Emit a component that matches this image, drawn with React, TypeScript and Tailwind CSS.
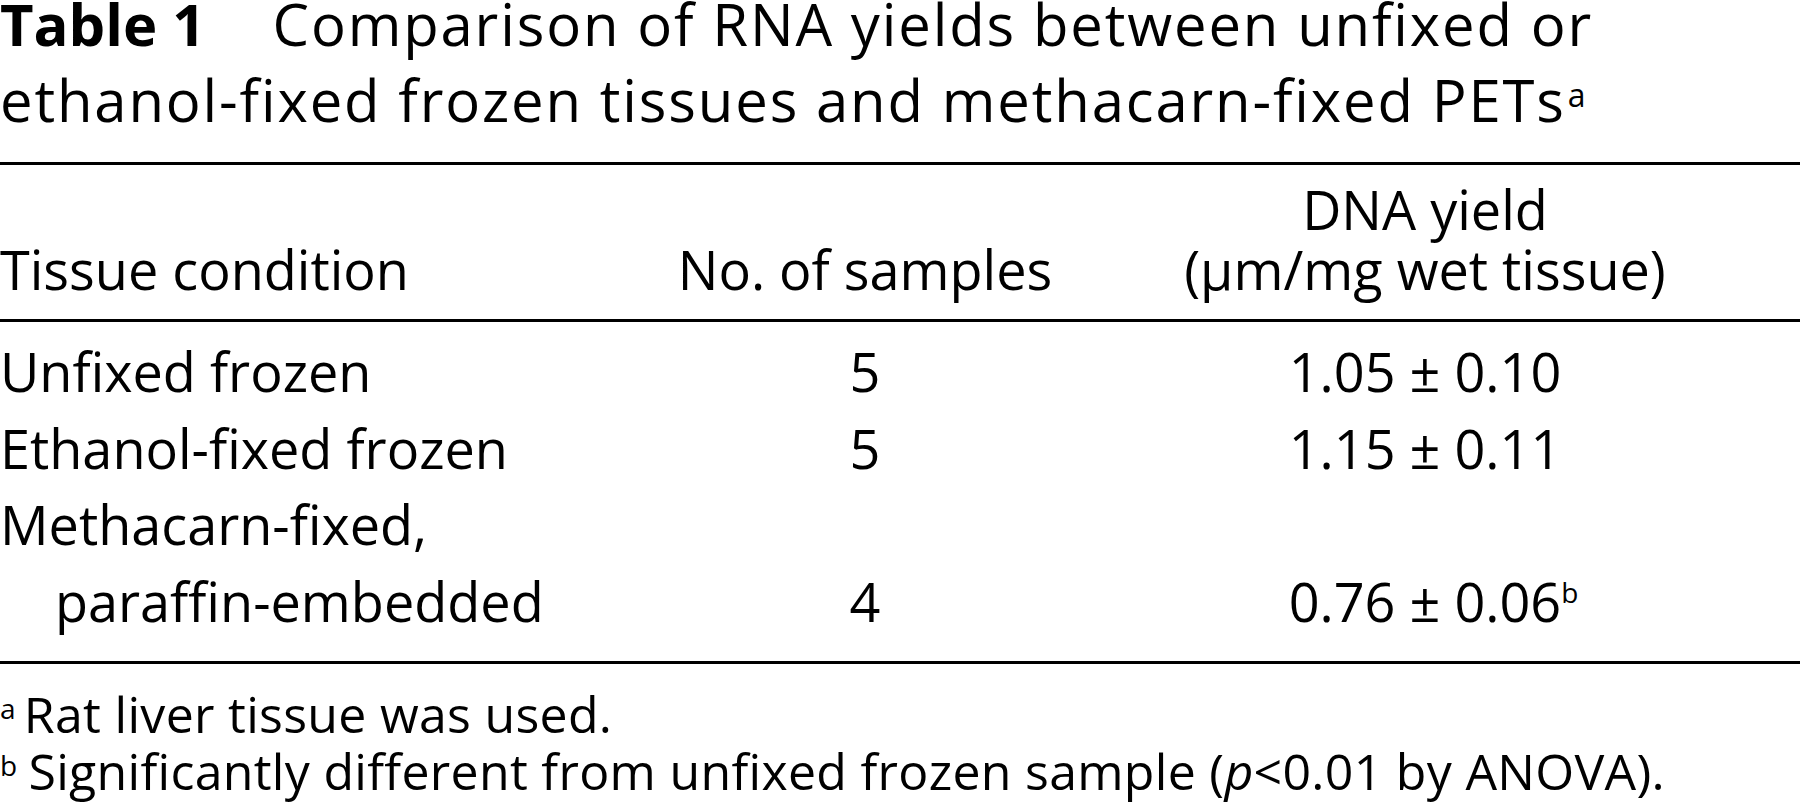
const rows = [
  { condition: "Unfixed frozen", samples: "5", value: "1.05 ± 0.10" },
  { condition: "Ethanol-fixed frozen", samples: "5", value: "1.15 ± 0.11" },
];

export default function App() {
  return (
    <div className="flex h-[804px] w-[1800px] flex-col overflow-hidden bg-white text-black font-['Open_Sans',sans-serif]">
      {/* Caption */}
      <h1 className="text-[58px] font-normal tracking-[1.85px]">
        <span className="block leading-[48px]">
          <span className="font-bold tracking-normal">Table 1</span>
          <span className="ml-[67px]">Comparison of RNA yields between unfixed or</span>
        </span>
        <span className="mt-[14px] block leading-[76px]">
          ethanol-fixed frozen tissues and methacarn-fixed PETs
          <sup className="-top-[15px] ml-[2px] text-[32px]">a</sup>
        </span>
      </h1>

      <div className="mt-[24px] h-[3px] bg-black" />

      {/* Column heads */}
      <div className="grid grid-cols-[640px_450px_670px] pt-[14px] text-[54px] leading-[60px]">
        <div className="self-end">Tissue condition</div>
        <div className="self-end text-center">No. of samples</div>
        <div className="text-center">
          DNA yield
          <br />
          (μm/mg wet tissue)
        </div>
      </div>

      <div className="mt-[20px] h-[3px] bg-black" />

      {/* Body */}
      <div className="grid grid-cols-[640px_450px_670px] pt-[11px] text-[54px] leading-[76.5px]">
        {rows.map((row) => (
          <div key={row.condition} className="contents">
            <div>{row.condition}</div>
            <div className="text-center">{row.samples}</div>
            <div className="text-center">{row.value}</div>
          </div>
        ))}
        <div>
          Methacarn-fixed,
          <div className="pl-[55px]">paraffin-embedded</div>
        </div>
        <div className="self-end text-center">4</div>
        <div className="self-end text-center">
          0.76 ± 0.06
          <sup className="-top-[19px] -mr-[17px] text-[28px]">b</sup>
        </div>
      </div>

      <div className="mt-[22px] h-[3px] bg-black" />

      {/* Footnotes */}
      <div className="mt-[22px] text-[50px] leading-[57px] tracking-[0.3px]">
        <p>
          <sup className="-top-[14px] mr-[8px] text-[28px]">a</sup>Rat liver tissue was used.
        </p>
        <p>
          <sup className="-top-[14px] mr-[11px] text-[28px]">b</sup>Significantly different from
          unfixed frozen sample (<i>p</i>&lt;0.01 by ANOVA).
        </p>
      </div>
    </div>
  );
}
